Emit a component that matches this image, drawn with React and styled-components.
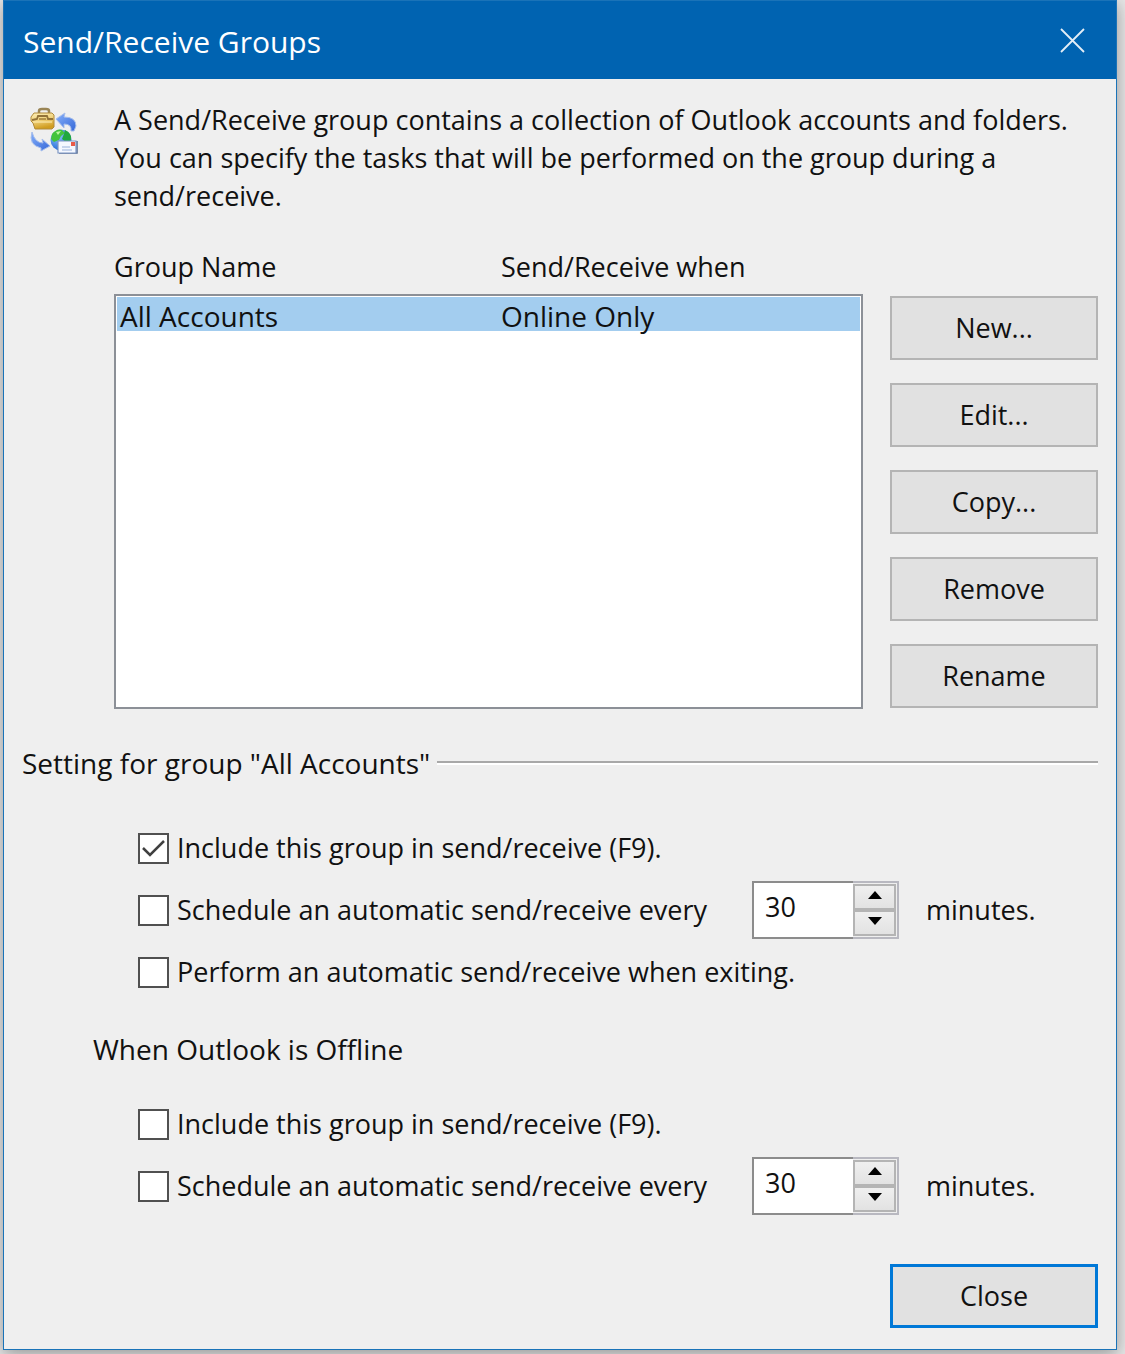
import { useState } from 'react'
import styled, { createGlobalStyle } from 'styled-components'

const colors = {
    title: '#0063b1',
    accent: '#0078d7',
    face: '#efefef',
    button: '#e1e1e1',
    buttonBorder: '#b4b4b4',
    listBorder: '#8c9097',
    selected: '#a3cdef',
    text: '#111111',
}

const GlobalStyle = createGlobalStyle`
    *, *::after {
        box-sizing: border-box;
    }
    body {
        margin: 0;
        background: #e6e6e6;
        color: ${colors.text};
        font-family: 'Open Sans', 'Noto Sans', sans-serif;
        font-size: 27px;
        line-height: 38px;
    }
    button, input {
        font: inherit;
        color: inherit;
    }
`

const Page = styled.div`
    padding: 0 8px 4px 3px;
    overflow: hidden;
`

const Dialog = styled.main`
    border: 1px solid #1a73b8;
    background: ${colors.face};
    box-shadow: 0 4px 16px rgba(0, 0, 0, 0.35);
`

const TitleBar = styled.header`
    display: flex;
    align-items: center;
    justify-content: space-between;
    height: 78px;
    padding: 4px 31px 0 19px;
    background: ${colors.title};
    color: #ffffff;
    & h1 {
        margin: 0;
        font-size: 30px;
        font-weight: 400;
    }
`

const CloseIcon = styled.button`
    display: flex;
    padding: 0 0 4px;
    border: 0;
    background: none;
`

const Content = styled.div`
    padding: 22px 18px 21px;
`

const Intro = styled.section`
    display: flex;
    margin-bottom: 33px;
    & svg {
        flex: none;
        margin: 5px 35px 0 7px;
    }
    & p {
        margin: 0;
    }
`

const Groups = styled.section`
    display: flex;
    gap: 27px;
    margin: 0 0 35px 92px;
`

const GroupTable = styled.table`
    display: block;
    flex: 1;
    & thead, & tbody {
        display: block;
    }
    & tr {
        display: grid;
        grid-template-columns: 387px 1fr;
    }
    & th, & td {
        padding: 0;
        font-weight: 400;
        text-align: left;
    }
    & thead {
        padding-bottom: 8px;
    }
    & tbody {
        height: 415px;
        padding: 1px;
        border: 2px solid ${colors.listBorder};
        background: #ffffff;
        font-size: 28px;
    }
    & tbody tr {
        grid-template-columns: 381px 1fr;
        height: 34px;
        padding-left: 3px;
        background: ${colors.selected};
    }
`

const ButtonColumn = styled.div`
    display: flex;
    flex-direction: column;
    gap: 23px;
    padding-top: 48px;
`

const Button = styled.button`
    width: 208px;
    height: 64px;
    padding: 0;
    border: ${({ $primary }) => ($primary ? `3px solid ${colors.accent}` : `2px solid ${colors.buttonBorder}`)};
    background: ${colors.button};
`

const Settings = styled.fieldset`
    min-width: 0;
    margin: 0;
    padding: 0;
    border: 0;
`

const Legend = styled.legend`
    display: flex;
    align-items: center;
    gap: 7px;
    width: 100%;
    margin-bottom: 37px;
    padding: 0;
    font-size: 28px;
    &::after {
        content: '';
        flex: 1;
        border-top: 2px solid #a8a8a8;
        border-bottom: 2px solid #ffffff;
    }
`

const Subtitle = styled.h2`
    margin: 29px 0 27px 71px;
    font-size: 28px;
    font-weight: 400;
`

const Options = styled.div`
    display: flex;
    flex-direction: column;
    gap: 4px;
    padding-left: 116px;
`

const OptionRow = styled.div`
    display: flex;
    align-items: center;
    height: 58px;
`

const OptionLabel = styled.label`
    display: flex;
    align-items: center;
    gap: 8px;
    width: ${({ $fixed }) => ($fixed ? '614px' : 'auto')};
`

const CheckWrap = styled.span`
    display: grid;
    & > * {
        grid-area: 1 / 1;
    }
    & input {
        appearance: none;
        width: 31px;
        height: 31px;
        margin: 0;
        border: 2px solid #505050;
        background: #ffffff;
    }
    & svg {
        z-index: 1;
        pointer-events: none;
    }
`

const Spinner = styled.span`
    display: flex;
    width: 147px;
    height: 58px;
    margin-right: 27px;
    border: 2px solid #b8b8c0;
    & input {
        appearance: textfield;
        width: 101px;
        margin: -2px 0 -2px -2px;
        padding: 0 0 6px 11px;
        border: 2px solid #8c8c8c;
        border-right: 0;
        border-radius: 0;
        background: #ffffff;
        outline: 0;
    }
    & input::-webkit-inner-spin-button {
        appearance: none;
        margin: 0;
    }
`

const Arrows = styled.span`
    display: flex;
    flex: 1;
    flex-direction: column;
    padding: 1px 1px 1px 0;
    & button {
        display: flex;
        flex: 1;
        align-items: center;
        justify-content: center;
        padding: 0 0 4px;
        border: 2px solid #b4b4b4;
        background: linear-gradient(#efefef, #e2e2e2);
    }
`

const Footer = styled.footer`
    display: flex;
    justify-content: flex-end;
    margin-top: 49px;
`

function SyncIcon() {
    return (
        <svg width="50" height="52" viewBox="0 0 50 52" aria-hidden="true">
            <defs>
                <linearGradient id="gold" x1="0" y1="0" x2="0.3" y2="1">
                    <stop offset="0" stopColor="#fff0b8" />
                    <stop offset="0.5" stopColor="#f0d27c" />
                    <stop offset="1" stopColor="#d09d20" />
                </linearGradient>
                <linearGradient id="arrow" x1="0" y1="0" x2="1" y2="1">
                    <stop offset="0" stopColor="#86b0fa" />
                    <stop offset="1" stopColor="#3467d8" />
                </linearGradient>
                <radialGradient id="globe" cx="0.35" cy="0.3" r="0.75">
                    <stop offset="0" stopColor="#8fc6ff" />
                    <stop offset="1" stopColor="#1f66d4" />
                </radialGradient>
            </defs>
            <path d="M10 7V5q0-2 3-2h4q3 0 3 2v2" fill="none" stroke="#9a8555" strokeWidth="2.5" />
            <path d="M5 7h18l2 2v12l-2 2H6l-2-6-2-2v-4z" fill="url(#gold)" stroke="#b08a3a" strokeWidth="1" />
            <path d="M3 14l5-1 1-3h9l1 3h5" fill="none" stroke="#927238" strokeWidth="1.8" />
            <path d="M10 13h7" stroke="#a07e38" strokeWidth="1.5" />
            <path d="M4 16h19" stroke="#fff0b8" strokeWidth="1" />
            <path d="M27 13l9-6-1 4q12 0 12 9l-2 5h-3q1-7-7-7v4z" fill="url(#arrow)" stroke="#a5bdec" strokeWidth="1" />
            <path d="M3 26q3 11 11 11l-1-4 8 7-9 5v-3Q-1 39 3 26z" fill="url(#arrow)" stroke="#a5bdec" strokeWidth="1" />
            <circle cx="32" cy="34" r="10.5" fill="url(#globe)" />
            <path d="M23 28q5-6 10-4l3 3-4 3-2 4-5 2-3-3z" fill="#42c43c" />
            <path d="M36 24q7 3 6 10l-4 3-5-4 2-5z" fill="#20a83e" />
            <path d="M27 26l5-1-3 4z" fill="#b8f79d" />
            <path d="M30 47h18V35" fill="none" stroke="#54698f" strokeWidth="1.5" />
            <path d="M29 35h18v12H29z" fill="#f5f8ff" stroke="#7c96c4" strokeWidth="1.2" />
            <path d="M42 36h4v4h-4z" fill="#ea5a48" />
            <path d="M33 41h8M33 44h10" stroke="#9ab2dc" strokeWidth="1.2" />
        </svg>
    )
}

function Check({ id, checked, onChange }) {
    return (
        <CheckWrap>
            <input id={id} type="checkbox" checked={checked} onChange={onChange} />
            {checked && (
                <svg width="31" height="31" viewBox="0 0 31 31" aria-hidden="true">
                    <path d="M5 15l7 7L26 8" fill="none" stroke="#404040" strokeWidth="2.5" />
                </svg>
            )}
        </CheckWrap>
    )
}

function Option({ id, label, defaultChecked = false, timed = false }) {
    const [checked, setChecked] = useState(defaultChecked)
    const [minutes, setMinutes] = useState(30)

    return (
        <OptionRow>
            <OptionLabel htmlFor={id} $fixed={timed}>
                <Check id={id} checked={checked} onChange={() => setChecked(!checked)} />
                {label}
            </OptionLabel>
            {timed && (
                <>
                    <Spinner>
                        <input
                            id={`${id}-minutes`}
                            type="number"
                            value={minutes}
                            onChange={(e) => setMinutes(Number(e.target.value))}
                        />
                        <Arrows>
                            <button type="button" aria-label="Increase" onClick={() => setMinutes(minutes + 1)}>
                                <svg width="14" height="8" viewBox="0 0 14 8"><path d="M0 8l7-8 7 8z" /></svg>
                            </button>
                            <button type="button" aria-label="Decrease" onClick={() => setMinutes(minutes - 1)}>
                                <svg width="14" height="8" viewBox="0 0 14 8"><path d="M0 0h14L7 8z" /></svg>
                            </button>
                        </Arrows>
                    </Spinner>
                    <label htmlFor={`${id}-minutes`}>minutes.</label>
                </>
            )}
        </OptionRow>
    )
}

function App() {
    return (
        <Page>
            <GlobalStyle />
            <Dialog>
                <TitleBar>
                    <h1>Send/Receive Groups</h1>
                    <CloseIcon type="button" aria-label="Close window">
                        <svg width="25" height="25" viewBox="0 0 25 25">
                            <path d="M1 1l23 23M24 1L1 24" stroke="#e4eef7" strokeWidth="1.8" />
                        </svg>
                    </CloseIcon>
                </TitleBar>
                <Content>
                    <Intro>
                        <SyncIcon />
                        <p>
                            A Send/Receive group contains a collection of Outlook accounts and folders.
                            You can specify the tasks that will be performed on the group during a
                            send/receive.
                        </p>
                    </Intro>
                    <Groups>
                        <GroupTable>
                            <thead>
                                <tr>
                                    <th>Group Name</th>
                                    <th>Send/Receive when</th>
                                </tr>
                            </thead>
                            <tbody>
                                <tr>
                                    <td>All Accounts</td>
                                    <td>Online Only</td>
                                </tr>
                            </tbody>
                        </GroupTable>
                        <ButtonColumn>
                            <Button type="button">New...</Button>
                            <Button type="button">Edit...</Button>
                            <Button type="button">Copy...</Button>
                            <Button type="button">Remove</Button>
                            <Button type="button">Rename</Button>
                        </ButtonColumn>
                    </Groups>
                    <Settings>
                        <Legend>Setting for group "All Accounts"</Legend>
                        {/* Online */}
                        <Options>
                            <Option id="online-include" label="Include this group in send/receive (F9)." defaultChecked />
                            <Option id="online-schedule" label="Schedule an automatic send/receive every" timed />
                            <Option id="online-exit" label="Perform an automatic send/receive when exiting." />
                        </Options>
                        {/* Offline */}
                        <Subtitle>When Outlook is Offline</Subtitle>
                        <Options>
                            <Option id="offline-include" label="Include this group in send/receive (F9)." />
                            <Option id="offline-schedule" label="Schedule an automatic send/receive every" timed />
                        </Options>
                    </Settings>
                    <Footer>
                        <Button type="button" $primary>Close</Button>
                    </Footer>
                </Content>
            </Dialog>
        </Page>
    )
}

export default App
